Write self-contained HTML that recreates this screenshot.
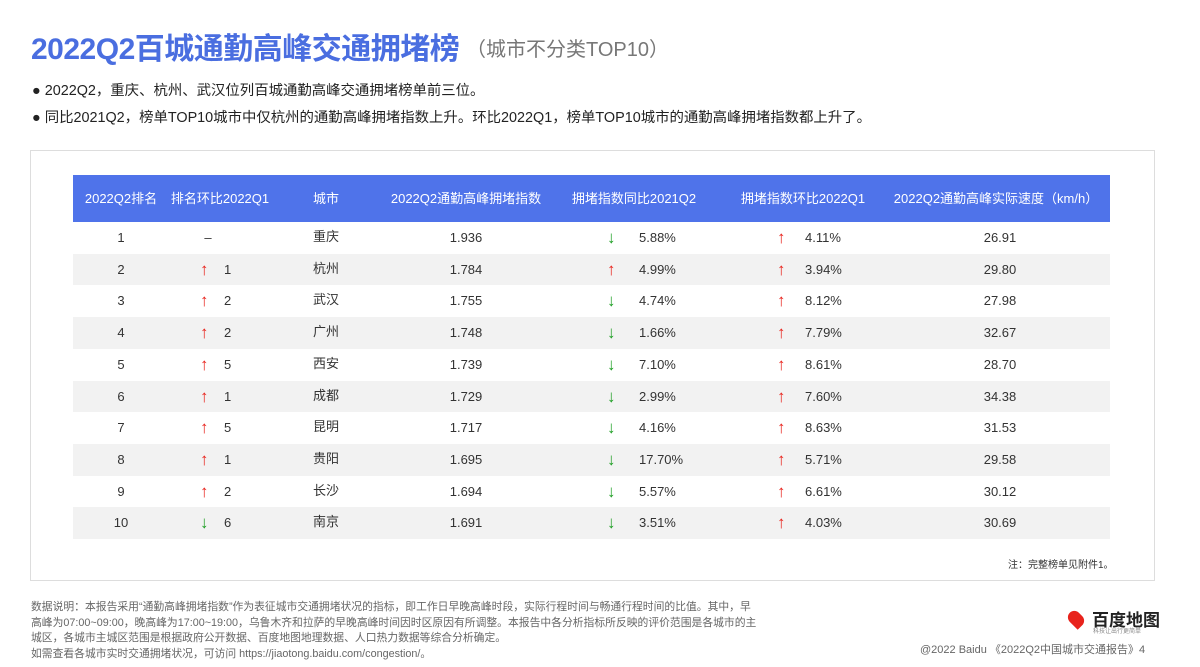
<!DOCTYPE html>
<html><head><meta charset="utf-8"><style>
*{margin:0;padding:0;box-sizing:border-box}
body{width:1200px;height:667px;background:#fff;font-family:"Liberation Sans","Noto Sans CJK SC",sans-serif;position:relative;overflow:hidden;color:#222}
.a{position:absolute;white-space:nowrap}
.c{position:absolute;transform:translateX(-50%);white-space:nowrap}
.row{position:absolute;left:73px;width:1037px;height:31.7px;font-size:13px;color:#333}
.row span{position:absolute;top:0;line-height:31.7px}
.up{color:#e8231c;font-size:17px}
.dn{color:#1e9e24;font-size:17px}
.hd{position:absolute;left:73px;top:175px;width:1037px;height:47px;background:#4f73ea;color:#fff;font-size:13px}
.hd span{position:absolute;top:0;line-height:47px;transform:translateX(-50%);white-space:nowrap}
</style></head><body>
<div class="a" style="left:31px;top:24px;font-size:30px;font-weight:bold;color:#4a6ee0;letter-spacing:-0.5px">2022Q2百城通勤高峰交通拥堵榜</div>
<div class="a" style="left:466px;top:33px;font-size:20px;color:#777">（城市不分类TOP10）</div>
<div class="a" style="left:32px;top:79px;font-size:14.4px">● 2022Q2，重庆、杭州、武汉位列百城通勤高峰交通拥堵榜单前三位。</div>
<div class="a" style="left:32px;top:106px;font-size:14.4px">● 同比2021Q2，榜单TOP10城市中仅杭州的通勤高峰拥堵指数上升。环比2022Q1，榜单TOP10城市的通勤高峰拥堵指数都上升了。</div>
<div class="a" style="left:30px;top:150px;width:1125px;height:431px;border:1px solid #ddd"></div>
<div class="hd">
<span style="left:48px">2022Q2排名</span><span style="left:147px">排名环比2022Q1</span><span style="left:253px">城市</span><span style="left:393px">2022Q2通勤高峰拥堵指数</span><span style="left:561px">拥堵指数同比2021Q2</span><span style="left:730px">拥堵指数环比2022Q1</span><span style="left:923px">2022Q2通勤高峰实际速度（km/h）</span>
</div>
<div id="rows"></div>
<div class="a" style="left:1008px;top:556px;font-size:10px;color:#333">注：完整榜单见附件1。</div>
<div class="a" style="left:31px;top:600px;font-size:10.8px;color:#666;line-height:15.5px">数据说明：本报告采用“通勤高峰拥堵指数”作为表征城市交通拥堵状况的指标，即工作日早晚高峰时段，实际行程时间与畅通行程时间的比值。其中，早<br>高峰为07:00~09:00，晚高峰为17:00~19:00，乌鲁木齐和拉萨的早晚高峰时间因时区原因有所调整。本报告中各分析指标所反映的评价范围是各城市的主<br>城区，各城市主城区范围是根据政府公开数据、百度地图地理数据、人口热力数据等综合分析确定。<br>如需查看各城市实时交通拥堵状况，可访问 https://jiaotong.baidu.com/congestion/。</div>
<div class="a" style="left:1068px;top:608px;width:16px;height:22px;border-radius:8px 8px 8px 0;background:#e8231c;transform:rotate(-45deg) scale(.8)"></div>
<div class="a" style="left:1092px;top:606px;font-size:17px;font-weight:bold;color:#222">百度地图</div>
<div class="a" style="left:1093px;top:626px;font-size:6px;color:#888">科技让出行更简单</div>
<div class="a" style="left:920px;top:641px;font-size:11px;color:#666">@2022 Baidu 《2022Q2中国城市交通报告》4</div>
<script>
var d=[[1,'',' ','重庆','1.936','d','5.88%','u','4.11%','26.91'],[2,'u','1','杭州','1.784','u','4.99%','u','3.94%','29.80'],[3,'u','2','武汉','1.755','d','4.74%','u','8.12%','27.98'],[4,'u','2','广州','1.748','d','1.66%','u','7.79%','32.67'],[5,'u','5','西安','1.739','d','7.10%','u','8.61%','28.70'],[6,'u','1','成都','1.729','d','2.99%','u','7.60%','34.38'],[7,'u','5','昆明','1.717','d','4.16%','u','8.63%','31.53'],[8,'u','1','贵阳','1.695','d','17.70%','u','5.71%','29.58'],[9,'u','2','长沙','1.694','d','5.57%','u','6.61%','30.12'],[10,'d','6','南京','1.691','d','3.51%','u','4.03%','30.69']];
var h='';
function ar(t,x){return t?'<span class="'+(t=='u'?'up':'dn')+'" style="left:'+x+'px">'+(t=='u'?'↑':'↓')+'</span>':'';}
d.forEach(function(r,i){
h+='<div class="row" style="top:'+(222+i*31.7)+'px;background:'+(i%2?'#f2f2f2':'#fff')+'">'+
'<span class="c" style="left:48px">'+r[0]+'</span>'+
(r[1]?ar(r[1],127)+'<span style="left:151px">'+r[2]+'</span>':'<span class="c" style="left:135px">–</span>')+
'<span style="left:240px;top:-1px">'+r[3]+'</span>'+
'<span class="c" style="left:393px">'+r[4]+'</span>'+
ar(r[5],534)+'<span style="left:566px">'+r[6]+'</span>'+
ar(r[7],704)+'<span style="left:732px">'+r[8]+'</span>'+
'<span class="c" style="left:927px">'+r[9]+'</span></div>';});
document.getElementById('rows').innerHTML=h;
</script>
</body></html>
